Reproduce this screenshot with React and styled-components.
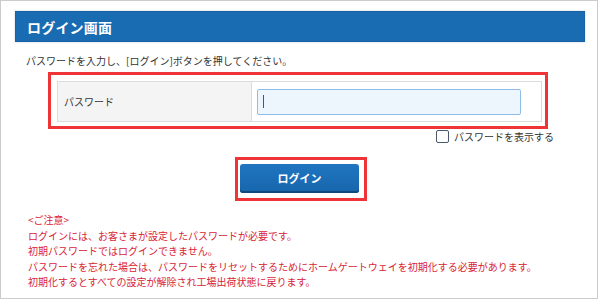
import React from 'react'
import styled, { createGlobalStyle } from 'styled-components'

const Global = createGlobalStyle`
  html, body {
    margin: 0;
    padding: 0;
    background: #ffffff;
  }
  body {
    font-family: "Noto Sans CJK JP", "Noto Sans", sans-serif;
  }
`

const Frame = styled.div`
  box-sizing: border-box;
  width: 598px;
  height: 299px;
  border: 1px solid #cccccc;
  background: #ffffff;
  overflow: hidden;
`

const Header = styled.div`
  margin: 10px 12px 0 14px;
  height: 31px;
  box-sizing: border-box;
  background: #1a6cb2;
  border: 1px solid #1862a4;
  box-shadow: 0 0 2px rgba(120, 150, 190, 0.4);
  display: flex;
  align-items: center;
  padding-left: 11px;
`

const Title = styled.h1`
  margin: 0;
  font-size: 14px;
  font-weight: 700;
  color: #ffffff;
  letter-spacing: 0.2px;
`

const Lead = styled.p`
  margin: 11px 0 0 25px;
  font-size: 10px;
  line-height: 16px;
  color: #333333;
`

const Highlight = styled.div`
  box-sizing: border-box;
  width: ${p => p.$w}px;
  margin: ${p => p.$m};
  border: 3px solid #ee3436;
  padding: ${p => p.$pad};
`

const FormTable = styled.div`
  box-sizing: border-box;
  width: 485px;
  height: 41px;
  display: grid;
  grid-template-columns: 194px 1fr;
  border: 1px solid #dcdcdc;
`

const LabelCell = styled.div`
  display: flex;
  align-items: center;
  padding-left: 6px;
  background: #f4f4f4;
  border-right: 1px solid #dcdcdc;
  font-size: 10px;
  color: #333333;
`

const InputCell = styled.div`
  display: flex;
  align-items: center;
  padding-left: 5px;
  background: #ffffff;
`

const PasswordInput = styled.div`
  box-sizing: border-box;
  width: 264px;
  height: 26px;
  background: #eef6fd;
  border: 1px solid #8fbde9;
  border-radius: 2px;
  display: flex;
  align-items: center;
  padding-left: 5px;
`

const Caret = styled.span`
  width: 1px;
  height: 13px;
  background: #555555;
`

const ShowRow = styled.label`
  display: flex;
  align-items: center;
  justify-content: flex-end;
  gap: 5px;
  margin-top: 1px;
  padding-right: 43px;
  height: 13px;
  font-size: 10px;
  color: #333333;
`

const CheckBox = styled.span`
  box-sizing: border-box;
  width: 13px;
  height: 13px;
  border: 1px solid #4b5868;
  border-radius: 2px;
  background: #ffffff;
`

const LoginButton = styled.button`
  box-sizing: border-box;
  width: 119px;
  height: 29px;
  border: none;
  border-radius: 3px;
  background: linear-gradient(#2075c0, #1766ad);
  box-shadow: inset 0 -2px 0 #10497e;
  color: #ffffff;
  font-family: "Noto Sans CJK JP", sans-serif;
  font-size: 11px;
  font-weight: 700;
  display: flex;
  align-items: center;
  justify-content: center;
  padding: 0 0 2px 0;
`

const Notes = styled.div`
  margin: 11px 0 0 27px;
  font-size: 10px;
  line-height: 15.6px;
  color: #d92437;
`

const notes = [
  '<ご注意>',
  'ログインには、お客さまが設定したパスワードが必要です。',
  '初期パスワードではログインできません。',
  'パスワードを忘れた場合は、パスワードをリセットするためにホームゲートウェイを初期化する必要があります。',
  '初期化するとすべての設定が解除され工場出荷状態に戻ります。',
]

export default function App() {
  return (
    <>
      <Global />
      <Frame>
        <Header>
          <Title>ログイン画面</Title>
        </Header>
        <Lead>パスワードを入力し、[ログイン]ボタンを押してください。</Lead>

        <Highlight $w={500} $m="3px 0 0 47px" $pad="6px 3px 4px 6px">
          <FormTable>
            <LabelCell>パスワード</LabelCell>
            <InputCell>
              <PasswordInput>
                <Caret />
              </PasswordInput>
            </InputCell>
          </FormTable>
        </Highlight>

        <ShowRow>
          <CheckBox />
          パスワードを表示する
        </ShowRow>

        <Highlight $w={132} $m="14px 0 0 234px" $pad="4px 5px 5px 2px">
          <LoginButton>ログイン</LoginButton>
        </Highlight>

        <Notes>
          {notes.map(n => (
            <div key={n}>{n}</div>
          ))}
        </Notes>
      </Frame>
    </>
  )
}
